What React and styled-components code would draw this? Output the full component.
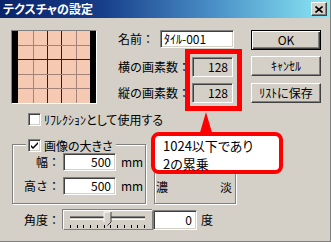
import React from 'react';
import styled, { createGlobalStyle, css } from 'styled-components';

const Global = createGlobalStyle`
  html, body {
    margin: 0;
    padding: 0;
    background: #d4d0c8;
  }
  body {
    font-family: "Noto Sans CJK JP", "Noto Sans", sans-serif;
    font-size: 12px;
    color: #000;
    font-feature-settings: "palt";
  }
  * {
    box-sizing: border-box;
  }
`;

const sunken = css`
  border: 1px solid;
  border-color: #808080 #fff #fff #808080;
  box-shadow: inset 1px 1px 0 #404040, inset -1px -1px 0 #d4d0c8;
`;

const etched = css`
  border: 1px solid #808080;
  box-shadow: inset 1px 1px 0 #fff, 1px 1px 0 #fff;
`;

const Window = styled.div`
  position: relative;
  width: 331px;
  height: 242px;
  background: #d4d0c8;
  border-right: 1px solid #808080;
  border-bottom: 1px solid #808080;
  display: flex;
  flex-direction: column;
  overflow: hidden;
`;

const TitleBar = styled.div`
  height: 18px;
  flex: none;
  display: flex;
  align-items: center;
  justify-content: space-between;
  padding: 0 3px 0 3px;
  background: linear-gradient(to right, #0a246a 0%, #163c88 30%, #4a90c8 65%, #8ae8f4 100%);
`;

const Title = styled.span`
  color: #fff;
  font-weight: bold;
  font-size: 12px;
  line-height: 14px;
`;

const CloseBox = styled.div`
  width: 16px;
  height: 14px;
  background: #d4d0c8;
  border: 1px solid;
  border-color: #fff #404040 #404040 #fff;
  box-shadow: inset -1px -1px 0 #808080;
  display: flex;
  align-items: center;
  justify-content: center;
`;

const Body = styled.div`
  flex: 1;
  display: flex;
  flex-direction: column;
  padding: 12px 0 0 11px;
`;

const TopRow = styled.div`
  display: flex;
  align-items: flex-start;
`;

const Preview = styled.div`
  width: 86px;
  height: 74px;
  border: 1px solid;
  border-color: #808080 #fff #fff #808080;
  background: #000;
  display: flex;
  justify-content: center;
  padding-right: 1px;
`;

const FieldCol = styled.div`
  margin-left: 21px;
  width: 116px;
  display: flex;
  flex-direction: column;
`;

const FieldRow = styled.div`
  display: flex;
  align-items: center;
  height: ${p => p.$h}px;
  margin-top: ${p => p.$mt || 0}px;
`;

const Label = styled.span`
  width: ${p => p.$w}px;
  margin-right: ${p => p.$mr || 0}px;
  flex: none;
  text-align: ${p => p.$align || 'left'};
  white-space: nowrap;
  line-height: 14px;
  font-feature-settings: normal;
`;

const TextBox = styled.div`
  ${sunken};
  width: ${p => p.$w}px;
  height: ${p => p.$h}px;
  margin-left: ${p => p.$ml || 0}px;
  background: ${p => (p.$readonly ? '#d4d0c8' : '#fff')};
  display: flex;
  align-items: center;
  justify-content: ${p => (p.$right ? 'flex-end' : 'flex-start')};
  padding: 0 4px 0 3px;
  line-height: 14px;
  white-space: nowrap;
`;

const ButtonCol = styled.div`
  margin-left: 17px;
  display: flex;
  flex-direction: column;
`;

const Button = styled.div`
  width: 70px;
  height: 20px;
  margin-top: ${p => p.$mt || 0}px;
  display: flex;
  align-items: center;
  justify-content: center;
  background: #d4d0c8;
  line-height: 14px;
  ${p =>
    p.$default
      ? css`
          border: 1px solid #000;
          box-shadow: inset 1px 1px 0 #fff, inset -1px -1px 0 #404040, inset -2px -2px 0 #808080;
        `
      : css`
          border: 1px solid;
          border-color: #fff #404040 #404040 #fff;
          box-shadow: inset -1px -1px 0 #808080;
        `}
`;

const CheckRow = styled.div`
  display: flex;
  align-items: center;
  gap: 3px;
  margin-top: 9px;
  padding-left: 17px;
  height: 13px;
  line-height: 13px;
`;

const CheckBox = styled.div`
  ${sunken};
  width: 13px;
  height: 13px;
  flex: none;
  background: #fff;
  display: flex;
  align-items: center;
  justify-content: center;
`;

const BottomRow = styled.div`
  display: flex;
  margin-top: 18px;
  padding-left: 1px;
`;

const GroupBox = styled.div`
  ${etched};
  position: relative;
  width: 134px;
  height: 60px;
  padding-top: 8px;
  display: flex;
  flex-direction: column;
  gap: 6px;
`;

const Legend = styled.div`
  position: absolute;
  top: -6px;
  left: 13px;
  padding: 0 3px 0 2px;
  background: #d4d0c8;
  display: flex;
  align-items: center;
  gap: 3px;
  height: 13px;
  line-height: 13px;
`;

const SizeRow = styled.div`
  display: flex;
  align-items: center;
  height: 18px;
`;

const Unit = styled.span`
  margin-left: 5px;
  line-height: 14px;
`;

const ShadePanel = styled.div`
  ${etched};
  margin-left: 8px;
  width: 82px;
  height: 60px;
  display: flex;
  align-items: flex-end;
  justify-content: space-between;
  padding: 0 3px 9px 1px;
  line-height: 14px;
`;

const AngleRow = styled.div`
  display: flex;
  align-items: center;
  height: 20px;
  margin-top: 6px;
  padding-left: 2px;
`;

const Slider = styled.div`
  width: 90px;
  height: 20px;
  border: 1px solid;
  border-color: #fff #808080 #808080 #fff;
  box-shadow: -1px -1px 0 #808080;
`;

const Suffix = styled.span`
  margin-left: 4px;
  line-height: 14px;
`;

const Highlight = styled.div`
  position: absolute;
  left: 185px;
  top: 49px;
  width: 57px;
  height: 62px;
  border: 5px solid #ff0000;
`;

const Callout = styled.div`
  position: absolute;
  left: 151px;
  top: 132px;
  width: 132px;
  height: 42px;
  border: 4px solid #ff0000;
  border-radius: 8px;
  background: #fff;
  padding: 1px 0 0 8px;
  font-size: 13px;
  line-height: 18px;

  &::before {
    content: '';
    position: absolute;
    top: -24px;
    left: 44px;
    width: 0;
    height: 0;
    border-left: 7px solid transparent;
    border-right: 7px solid transparent;
    border-bottom: 24px solid #ff0000;
  }
`;

const Texture = () => {
  const light = '#a48478';
  const dark = '#3c1a10';
  const vs = [
    [15, light],
    [29, dark],
    [43, dark],
    [58, light]
  ];
  const hs = [
    [14, light],
    [28, dark],
    [43, light],
    [57, light]
  ];
  return (
    <svg width="72" height="72" viewBox="0 0 72 72">
      <rect width="72" height="72" fill="#f6c9b3" />
      {vs.map(([x, c]) => (
        <rect key={'v' + x} x={x} y="0" width="1" height="72" fill={c} />
      ))}
      {hs.map(([y, c]) => (
        <rect key={'h' + y} x="0" y={y} width="72" height="1" fill={c} />
      ))}
    </svg>
  );
};

const Check = () => (
  <svg width="9" height="9" viewBox="0 0 9 9">
    <path d="M1 4 L3 6 L8 1 L8 3 L3 8 L1 6 Z" fill="#000" />
  </svg>
);

const SliderArt = () => {
  const ticks = Array.from({ length: 12 }, (_, i) => 6 + Math.round((i * 74) / 11));
  return (
    <svg width="88" height="18" viewBox="0 0 88 18">
      <rect x="6" y="5" width="75" height="1" fill="#808080" />
      <rect x="6" y="6" width="75" height="1" fill="#404040" />
      <rect x="6" y="7" width="75" height="1" fill="#d4d0c8" />
      <rect x="6" y="8" width="75" height="1" fill="#fff" />
      <path d="M40 1 H47 V11 L43.5 14.5 L40 11 Z" fill="#d4d0c8" />
      <path d="M40 11 V1 H47" fill="none" stroke="#fff" strokeWidth="1" />
      <path d="M47 1 V11 L43.5 14.5" fill="none" stroke="#404040" strokeWidth="1" />
      {ticks.map(x => (
        <rect key={x} x={x} y="14" width="1" height="3" fill="#000" />
      ))}
    </svg>
  );
};

export default function App() {
  return (
    <>
      <Global />
      <Window>
        <TitleBar>
          <Title>テクスチャの設定</Title>
          <CloseBox>
            <svg width="8" height="7" viewBox="0 0 8 7">
              <path d="M0.5 0.5 L7.5 6.5 M7.5 0.5 L0.5 6.5" stroke="#000" strokeWidth="1.6" />
            </svg>
          </CloseBox>
        </TitleBar>
        <Body>
          <TopRow>
            <Preview>
              <Texture />
            </Preview>
            <FieldCol>
              <FieldRow $h={18}>
                <Label $w={42}>名前：</Label>
                <TextBox $w={74} $h={18}>ﾀｲﾙ-001</TextBox>
              </FieldRow>
              <FieldRow $h={20} $mt={9}>
                <Label $w={74}>横の画素数：</Label>
                <TextBox $w={41} $h={20} $readonly $right>
                  128
                </TextBox>
              </FieldRow>
              <FieldRow $h={20} $mt={6}>
                <Label $w={74}>縦の画素数：</Label>
                <TextBox $w={41} $h={20} $readonly $right>
                  128
                </TextBox>
              </FieldRow>
            </FieldCol>
            <ButtonCol>
              <Button $default>OK</Button>
              <Button $mt={6}>ｷｬﾝｾﾙ</Button>
              <Button $mt={7}>ﾘｽﾄに保存</Button>
            </ButtonCol>
          </TopRow>
          <CheckRow>
            <CheckBox />
            <span>ﾘﾌﾚｸｼｮﾝとして使用する</span>
          </CheckRow>
          <BottomRow>
            <GroupBox>
              <Legend>
                <CheckBox>
                  <Check />
                </CheckBox>
                <span>画像の大きさ</span>
              </Legend>
              <SizeRow>
                <Label $w={47} $align="right">幅：</Label>
                <TextBox $w={53} $h={18} $ml={3} $right>
                  500
                </TextBox>
                <Unit>mm</Unit>
              </SizeRow>
              <SizeRow>
                <Label $w={47} $align="right">高さ：</Label>
                <TextBox $w={53} $h={18} $ml={3} $right>
                  500
                </TextBox>
                <Unit>mm</Unit>
              </SizeRow>
            </GroupBox>
            <ShadePanel>
              <span>濃</span>
              <span>淡</span>
            </ShadePanel>
          </BottomRow>
          <AngleRow>
            <Label $w={47} $mr={3} $align="right">
              角度：
            </Label>
            <Slider>
              <SliderArt />
            </Slider>
            <TextBox $w={44} $h={20} $right>
              0
            </TextBox>
            <Suffix>度</Suffix>
          </AngleRow>
        </Body>
        <Highlight />
        <Callout>
          1024以下であり
          <br />
          2の累乗
        </Callout>
      </Window>
    </>
  );
}
